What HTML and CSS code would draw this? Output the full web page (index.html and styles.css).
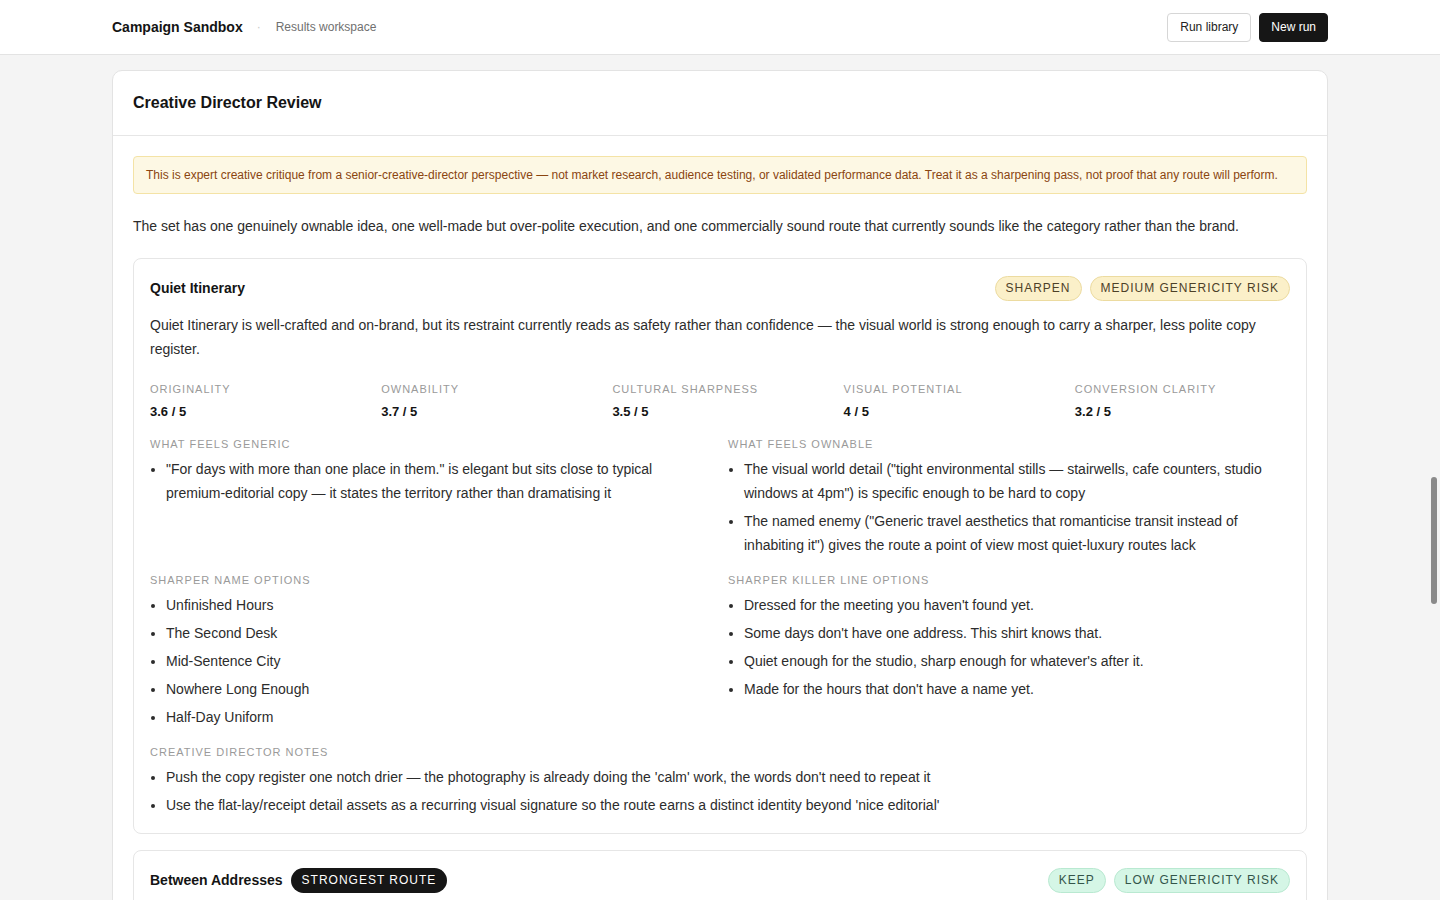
FILE: index.html
```html
<!DOCTYPE html>
<html lang="en">
<head>
    <meta charset="UTF-8">
    <meta name="viewport" content="width=device-width, initial-scale=1.0">
    <title>Campaign Sandbox - Creative Director Review</title>
    <link rel="stylesheet" href="styles.css">
</head>
<body>
    <header class="topbar">
        <div class="topbar-inner">
            <div class="brand">
                <span class="brand-name">Campaign Sandbox</span>
                <span class="brand-dot">·</span>
                <span class="brand-sub">Results workspace</span>
            </div>
            <div class="actions">
                <button class="btn btn-ghost" type="button">Run library</button>
                <button class="btn btn-dark" type="button">New run</button>
            </div>
        </div>
    </header>

    <main class="page">
        <section class="panel">
            <div class="panel-head">
                <h2>Creative Director Review</h2>
            </div>
            <div class="panel-body">
                <div class="notice">This is expert creative critique from a senior-creative-director perspective — not market research, audience testing, or validated performance data. Treat it as a sharpening pass, not proof that any route will perform.</div>
                <p class="summary">The set has one genuinely ownable idea, one well-made but over-polite execution, and one commercially sound route that currently sounds like the category rather than the brand.</p>

                <article class="route">
                    <div class="route-head">
                        <div class="route-title">
                            <h3>Quiet Itinerary</h3>
                        </div>
                        <div class="tags">
                            <span class="tag tag-amber">Sharpen</span>
                            <span class="tag tag-amber">Medium genericity risk</span>
                        </div>
                    </div>
                    <p class="route-desc">Quiet Itinerary is well-crafted and on-brand, but its restraint currently reads as safety rather than confidence — the visual world is strong enough to carry a sharper, less polite copy register.</p>

                    <div class="scores">
                        <div class="score"><div class="label">Originality</div><div class="value">3.6 / 5</div></div>
                        <div class="score"><div class="label">Ownability</div><div class="value">3.7 / 5</div></div>
                        <div class="score"><div class="label">Cultural sharpness</div><div class="value">3.5 / 5</div></div>
                        <div class="score"><div class="label">Visual potential</div><div class="value">4 / 5</div></div>
                        <div class="score"><div class="label">Conversion clarity</div><div class="value">3.2 / 5</div></div>
                    </div>

                    <div class="columns">
                        <div class="block">
                            <div class="label">What feels generic</div>
                            <ul>
                                <li>"For days with more than one place in them." is elegant but sits close to typical premium-editorial copy — it states the territory rather than dramatising it</li>
                            </ul>
                        </div>
                        <div class="block">
                            <div class="label">What feels ownable</div>
                            <ul>
                                <li>The visual world detail ("tight environmental stills — stairwells, cafe counters, studio windows at 4pm") is specific enough to be hard to copy</li>
                                <li>The named enemy ("Generic travel aesthetics that romanticise transit instead of inhabiting it") gives the route a point of view most quiet-luxury routes lack</li>
                            </ul>
                        </div>
                        <div class="block">
                            <div class="label">Sharper name options</div>
                            <ul>
                                <li>Unfinished Hours</li>
                                <li>The Second Desk</li>
                                <li>Mid-Sentence City</li>
                                <li>Nowhere Long Enough</li>
                                <li>Half-Day Uniform</li>
                            </ul>
                        </div>
                        <div class="block">
                            <div class="label">Sharper killer line options</div>
                            <ul>
                                <li>Dressed for the meeting you haven't found yet.</li>
                                <li>Some days don't have one address. This shirt knows that.</li>
                                <li>Quiet enough for the studio, sharp enough for whatever's after it.</li>
                                <li>Made for the hours that don't have a name yet.</li>
                            </ul>
                        </div>
                    </div>

                    <div class="block">
                        <div class="label">Creative director notes</div>
                        <ul>
                            <li>Push the copy register one notch drier — the photography is already doing the 'calm' work, the words don't need to repeat it</li>
                            <li>Use the flat-lay/receipt detail assets as a recurring visual signature so the route earns a distinct identity beyond 'nice editorial'</li>
                        </ul>
                    </div>
                </article>

                <article class="route">
                    <div class="route-head">
                        <div class="route-title">
                            <h3>Between Addresses</h3>
                            <span class="tag tag-black">Strongest route</span>
                        </div>
                        <div class="tags">
                            <span class="tag tag-green">Keep</span>
                            <span class="tag tag-green">Low genericity risk</span>
                        </div>
                    </div>
                    <p class="route-desc">Between Addresses is the most ownable idea in the set — it turns an in-between day into a point of view rather than a mood.</p>
                </article>
            </div>
        </section>
    </main>

    <div class="scroll-thumb"></div>
</body>
</html>
```

FILE: styles.css
```css
* {
    box-sizing: border-box;
}
html, body {
    height: 100%;
    overflow: hidden;
}
body {
    margin: 0;
    font-family: 'Liberation Sans', Arial, sans-serif;
    background-color: #f4f4f4;
    color: #1a1a1a;
}
.topbar {
    background-color: #ffffff;
    border-bottom: 1px solid #e3e3e3;
    height: 55px;
}
.topbar-inner {
    max-width: 1216px;
    margin: 0 auto;
    height: 54px;
    display: flex;
    align-items: center;
    justify-content: space-between;
}
.brand {
    display: flex;
    align-items: center;
    gap: 14px;
}
.brand-name {
    font-size: 14px;
    font-weight: 700;
    color: #141414;
}
.brand-dot {
    color: #c8c8c8;
    font-size: 12px;
    margin: 0 1px 0 0;
}
.brand-sub {
    font-size: 12px;
    color: #707070;
}
.actions {
    display: flex;
    gap: 8px;
}
.btn {
    font-family: 'Liberation Sans', Arial, sans-serif;
    font-size: 12px;
    height: 29px;
    padding: 0 11px;
    border-radius: 4px;
    cursor: pointer;
}
.btn-ghost {
    background-color: #ffffff;
    border: 1px solid #d6d6d6;
    color: #222;
    padding: 0 12px;
}
.btn-dark {
    background-color: #161616;
    border: 1px solid #161616;
    color: #ffffff;
}
.page {
    max-width: 1216px;
    margin: 15px auto 0;
}
.panel {
    background-color: #ffffff;
    border: 1px solid #e3e3e3;
    border-radius: 10px;
}
.panel-head {
    height: 65px;
    padding: 0 20px;
    display: flex;
    align-items: center;
    border-bottom: 1px solid #e6e6e6;
}
.panel-head h2 {
    margin: 0;
    font-size: 16px;
    font-weight: 700;
    color: #141414;
}
.panel-body {
    padding: 20px 20px;
    display: flex;
    flex-direction: column;
}
.notice {
    background-color: #fdf8e4;
    border: 1px solid #f4e3a6;
    border-radius: 4px;
    padding: 11px 12px;
    font-size: 12px;
    line-height: 14px;
    color: #8a4510;
}
.summary {
    margin: 24px 0 24px;
    font-size: 14px;
    line-height: 16px;
    color: #2c2c2c;
}
.route {
    border: 1px solid #e6e6e6;
    border-radius: 8px;
    padding: 16px 16px 16px;
    margin-bottom: 16px;
}
.route-head {
    display: flex;
    align-items: center;
    justify-content: space-between;
    height: 26px;
}
.route-title {
    display: flex;
    align-items: center;
    gap: 8px;
}
.route-title h3 {
    margin: 0;
    font-size: 14px;
    font-weight: 700;
    color: #141414;
}
.tags {
    display: flex;
    gap: 8px;
}
.tag {
    display: inline-flex;
    align-items: center;
    height: 25px;
    padding: 0 10px;
    border-radius: 13px;
    font-size: 12px;
    letter-spacing: 1px;
    text-transform: uppercase;
    border: 1px solid transparent;
}
.tag-amber {
    background-color: #fbf0c9;
    border-color: #ecdba0;
    color: #4d4128;
}
.tag-green {
    background-color: #d5f6e6;
    border-color: #b9e9d1;
    color: #33554a;
}
.tag-black {
    background-color: #161616;
    color: #ffffff;
}
.route-desc {
    margin: 12px 0 0;
    font-size: 14px;
    line-height: 24px;
    color: #2c2c2c;
}
.label {
    font-size: 11px;
    line-height: 14px;
    letter-spacing: 1px;
    text-transform: uppercase;
    color: #9a9a9a;
}
.scores {
    display: grid;
    grid-template-columns: repeat(5, 1fr);
    gap: 16px;
    margin-top: 21px;
}
.score .value {
    margin-top: 8px;
    font-size: 13px;
    font-weight: 700;
    color: #141414;
}
.columns {
    display: grid;
    grid-template-columns: 1fr 1fr;
    column-gap: 16px;
    row-gap: 16px;
    margin-top: 18px;
}
.columns + .block {
    margin-top: 16px;
}
.block ul {
    margin: 6px 0 0;
    padding-left: 16px;
}
.block li {
    font-size: 14px;
    line-height: 24px;
    color: #2c2c2c;
    margin-bottom: 4px;
}
.block li:last-child {
    margin-bottom: 0;
}
.scroll-thumb {
    position: fixed;
    right: 3px;
    top: 477px;
    width: 6px;
    height: 127px;
    border-radius: 3px;
    background-color: #8a8a8a;
}
```
